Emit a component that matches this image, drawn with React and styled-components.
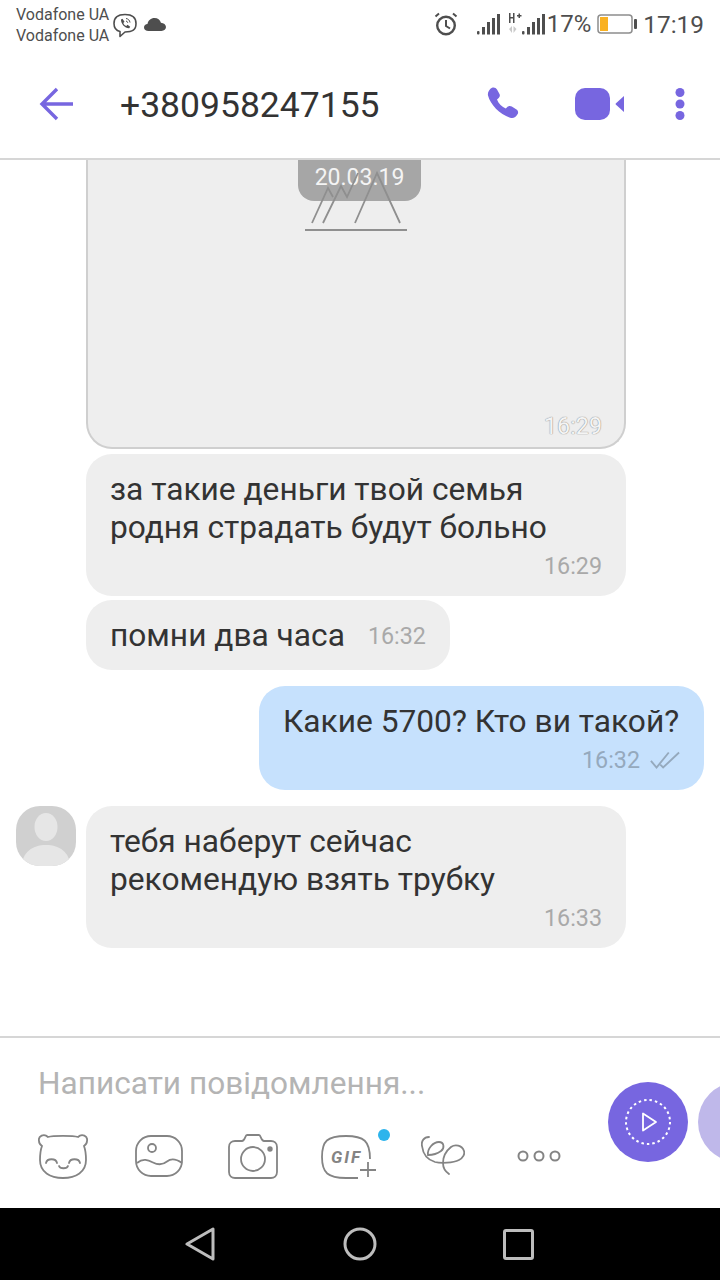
import React from "react";
import styled, { createGlobalStyle } from "styled-components";

const Global = createGlobalStyle`
  html, body { margin: 0; padding: 0; background: #fff; }
  * { box-sizing: border-box; }
`;
const Page = styled.div`
  width: 720px; height: 1280px; overflow: hidden; display: flex; flex-direction: column;
  font-family: Roboto, "Noto Sans", sans-serif; color: #333; background: #fff;
`;
const StatusBar = styled.div`
  height: 50px; display: flex; align-items: flex-start; padding: 3px 16px 0 16px; color: #4e4e4e;
`;
const Carriers = styled.div`
  font-size: 16px; line-height: 21px; width: 96px; white-space: nowrap; padding-top: 1px;
`;
const StatusLeftIcons = styled.div`
  display: flex; align-items: center; gap: 6px; height: 42px;
`;
const StatusRight = styled.div`
  margin-left: auto; display: flex; align-items: center; height: 42px; font-size: 24px; color: #4e4e4e;
`;
const Pct = styled.span`margin: 0 6px 0 1px; font-size: 24px;`;
const Clock = styled.span`margin-left: 5px; font-size: 24.4px;`;
const Header = styled.div`
  height: 110px; border-bottom: 2px solid #d6d6d6; display: flex; align-items: center;
  padding: 0 35px 0 39px; flex: none;
`;
const Title = styled.div`
  font-size: 35.5px; margin-left: 47px; color: #333; flex: 1; padding-top: 2px;
`;
const HeaderIcon = styled.svg`display: block; flex: none; margin-left: ${p => p.$ml || 0}px;`;
const Chat = styled.div`
  height: 876px; flex: none; overflow: hidden; padding: 0 16px; display: flex; flex-direction: column; position: relative;
`;
const ImageBubble = styled.div`
  position: relative; margin-left: 70px; width: 540px; height: 289px; background: #eee; flex: none;
  border: 2px solid #cfcfcf; border-top: none; border-radius: 0 0 26px 26px;
`;
const DateBadge = styled.div`
  position: absolute; top: 0; left: 210px; width: 123px; height: 41px; background: #a6a6a6; color: #f4f4f4;
  border-radius: 0 0 16px 16px; font-size: 23px; display: flex; align-items: center; justify-content: center; padding-bottom: 6px;
`;
const Mountains = styled.svg`position: absolute; left: 217px; top: 0; `;
const ImageTime = styled.span`
  position: absolute; right: 22px; bottom: 7px; font-size: 23.3px; color: #f4f4f4;
  text-shadow: 0 0 1px #8f8f8f, 0 0 1px #8f8f8f;
`;
const Row = styled.div`
  display: flex; align-items: flex-start; justify-content: ${p => p.$out ? "flex-end" : "flex-start"};
  margin-top: ${p => p.$mt}px; flex: none;
`;
const Avatar = styled.div`
  width: 60px; height: 60px; border-radius: 24px; background: #d0d0d0; margin-right: 10px; overflow: hidden; flex: none;
`;
const Bubble = styled.div`
  background: ${p => p.$out ? "#c6e1fd" : "#eee"}; border-radius: 26px;
  width: ${p => p.$w}px; height: ${p => p.$h}px; margin-left: ${p => p.$ml || 0}px;
  padding: 17px 24px 0; position: relative; flex: none;
`;
const MsgText = styled.div`font-size: 31.7px; line-height: 38px; white-space: nowrap; color: #333;`;
const Meta = styled.div`
  display: flex; justify-content: flex-end; align-items: center; gap: 10px; font-size: 23.3px; color: #a9a9a9;
  margin-top: 2px; height: 34px;
`;
const OutMeta = styled(Meta)`color: #95a9bd; margin-top: 2px;`;
const InlineRow = styled.div`display: flex; align-items: center; gap: 23px; height: 38px;`;
const InlineTime = styled.span`font-size: 23.3px; color: #a9a9a9;`;
const Composer = styled.div`
  height: 172px; flex: none; border-top: 2px solid #d6d6d6; display: flex; overflow: hidden;
`;
const ComposerMain = styled.div`
  width: 608px; flex: none; padding: 26px 0 0 38px; display: flex; flex-direction: column;
`;
const Placeholder = styled.div`font-size: 31.6px; line-height: 40px; color: #b4b4b4; white-space: nowrap;`;
const Tools = styled.div`display: flex; align-items: center; margin-top: 29px; height: 46px; position: relative;`;
const Tool = styled.svg`display: block; flex: none; margin-left: ${p => p.$ml || 0}px;`;
const Dot = styled.span`
  position: absolute; left: 340px; top: -4px; width: 12px; height: 12px; border-radius: 50%; background: #2db4ec;
`;
const SendButton = styled.div`
  width: 80px; height: 80px; border-radius: 50%; flex: none; margin-top: 44px; margin-left: ${p => p.$ml || 0}px;
  background: ${p => p.$light ? "#bfb8ea" : "#7766e0"}; display: flex; align-items: center; justify-content: center;
`;
const NavBar = styled.div`
  flex: none; height: 72px; background: #000; display: flex; align-items: center; padding: 0 0 0 185px;
`;
const NavIcon = styled.svg`display: block; flex: none; margin-left: ${p => p.$ml || 0}px;`;

const Signal = ({ w = 24 }) => (
  <svg width={w} height="22" viewBox="0 0 24 22" fill="#4e4e4e">
    <rect x="0" y="18" width="2.5" height="3.5" rx="1" />
    <rect x="5" y="14" width="3" height="7.5" />
    <rect x="10" y="9" width="3" height="12.5" />
    <rect x="15" y="5" width="3" height="16.5" />
    <rect x="20" y="1" width="3" height="20.5" />
  </svg>
);

export default function App() {
  return (
    <Page>
      <Global />
      <StatusBar>
        <Carriers>Vodafone UA<br />Vodafone UA</Carriers>
        <StatusLeftIcons>
          <svg width="26" height="26" viewBox="0 0 26 26" fill="none" stroke="#4e4e4e" strokeWidth="1.6" style={{ marginTop: 1 }}>
            <path d="M8 19.5C3.5 18.5 2 16 2 11.5 2 5 5.5 2.5 13 2.5S24 5 24 11.5 20.5 20 13 20l-5 4.5z" strokeLinejoin="round" />
            <path d="M9 7.5l1.5-.8 2 3-1.2 1.2c.5 1.5 1.500 2.500 3 3l1.200-1.200 2.700 2-1 1.500c-4 .3-8.500-4.500-8.200-8.700z" fill="#4e4e4e" stroke="none" />
            <path d="M14 6.500c2.200.3 3.700 1.800 4 4M14 9c1 .2 1.600.8 1.800 1.800" strokeWidth="1" />
          </svg>
          <svg width="22" height="13" viewBox="0 0 24 14" fill="#4e4e4e" style={{ marginTop: 1 }}>
            <path d="M5 14C2 14 0 12.500 0 10.300 0 8 1.800 6.700 3.800 6.500 4.500 2.800 7.500 0 11.500 0c3.500 0 6 2 7 5 3 .2 5.500 2 5.500 4.800 0 2.500-2 4.200-5 4.200z" />
          </svg>
        </StatusLeftIcons>
        <StatusRight>
          <svg width="24" height="24" viewBox="0 0 24 24" fill="none" stroke="#4e4e4e" strokeWidth="2.4" style={{ marginRight: 19 }}>
            <circle cx="12" cy="13.500" r="8.800" />
            <path d="M12 8v6l4 2.500" strokeWidth="2" />
            <path d="M1.500 4.500L5 1.500M22.500 4.500L19 1.500" strokeWidth="2" />
          </svg>
          <Signal />
          <svg width="14" height="24" viewBox="0 0 14 24" style={{ margin: "0 0 0 7px" }} fill="#4e4e4e">
            <path d="M1 1h1.500v4H5V1h1.500v10H5V6.500H2.500V11H1z" />
            <path d="M9 3h1.500V1.500H12V3h1.500v1.500H12V6h-1.500V4.500H9z" />
            <path d="M1 17l3-3v7zM5.500 14l3 3-3 4z" fill="#c9c9c9" />
          </svg>
          <Signal />
          <Pct>17%</Pct>
          <svg width="41" height="22" viewBox="0 0 41 22" fill="none">
            <rect x="1" y="2" width="34" height="18" rx="3" stroke="#8d8d8d" strokeWidth="1.500" fill="#fff" />
            <rect x="3" y="4" width="8" height="14" fill="#f9b122" />
            <rect x="37" y="6" width="3" height="10" rx="1" fill="#4e4e4e" />
          </svg>
          <Clock>17:19</Clock>
        </StatusRight>
      </StatusBar>
      <Header>
        <HeaderIcon width="34" height="34" viewBox="0 0 34 34" fill="none" stroke="#7766e0" strokeWidth="3.400">
          <path d="M34 17H4M18 2L3 17l15 15" />
        </HeaderIcon>
        <Title>+380958247155</Title>
        <HeaderIcon width="34" height="34" viewBox="0 0 34 34" fill="#7766e0">
          <path d="M5 .8c2-.8 4 0 5 1.700l2.500 4.500c.7 1.500.4 3-.8 4l-1.700 1.400c1.500 4 5 7.500 8.800 9l1.700-1.700c1.300-1 3-1 4.300-.2l4.700 3c1.500 1 2.200 3 1 4.800-1.400 2.500-3.700 4.300-6.500 3.700C13 27.500 3.500 18 1 8.500.3 5.500 2.500 2 5 .8z" />
        </HeaderIcon>
        <HeaderIcon $ml={54} width="50" height="32" viewBox="0 0 50 32" fill="#7766e0">
          <rect x="0" y="0" width="35" height="32" rx="10" />
          <path d="M49 8v16l-8-7.200a1 1 0 010-1.600z" />
        </HeaderIcon>
        <HeaderIcon $ml={50} width="10" height="32" viewBox="0 0 10 32" fill="#7766e0">
          <circle cx="5" cy="4.500" r="4.500" />
          <circle cx="5" cy="16" r="4.500" />
          <circle cx="5" cy="27.500" r="4.500" />
        </HeaderIcon>
      </Header>
      <Chat>
        <ImageBubble>
          <DateBadge>20.03.19</DateBadge>
          <Mountains width="104" height="74" viewBox="0 0 104 74" fill="none" stroke="#8f8f8f" strokeWidth="1.800">
            <path d="M0 70h102" strokeWidth="2.200" />
            <path d="M7 63L23 28l5 9" />
            <path d="M18 63L36 26l6 11 11-24" />
            <path d="M50 63L72 13l23 50" />
          </Mountains>
          <ImageTime>16:29</ImageTime>
        </ImageBubble>
        <Row $mt={5}>
          <Bubble $ml={70} $w={540} $h={142}>
            <MsgText>за такие деньги твой семья<br />родня страдать будут больно</MsgText>
            <Meta>16:29</Meta>
          </Bubble>
        </Row>
        <Row $mt={4}>
          <Bubble $ml={70} $w={364} $h={70}>
            <InlineRow>
              <MsgText>помни два часа</MsgText>
              <InlineTime>16:32</InlineTime>
            </InlineRow>
          </Bubble>
        </Row>
        <Row $mt={16} $out>
          <Bubble $out $w={445} $h={104}>
            <MsgText>Какие 5700? Кто ви такой?</MsgText>
            <OutMeta>
              16:32
              <svg width="30" height="20" viewBox="0 0 32 20" fill="none" stroke="#95a9bd" strokeWidth="2">
                <path d="M1 11l6 7L20 2M11 15l3 3L31 2" />
              </svg>
            </OutMeta>
          </Bubble>
        </Row>
        <Row $mt={16}>
          <Avatar>
            <svg width="60" height="60" viewBox="0 0 60 60" fill="#e6e6e6">
              <ellipse cx="30" cy="21" rx="11.500" ry="14" />
              <path d="M6 60c0-13 10-21 24-21s24 8 24 21z" />
            </svg>
          </Avatar>
          <Bubble $w={540} $h={142}>
            <MsgText>тебя наберут сейчас<br />рекомендую взять трубку</MsgText>
            <Meta>16:33</Meta>
          </Bubble>
        </Row>
      </Chat>
      <Composer>
        <ComposerMain>
          <Placeholder>Написати повідомлення...</Placeholder>
          <Tools>
            <Tool width="50" height="45" viewBox="0 0 50 45" fill="none" stroke="#848484" strokeWidth="1.800" strokeLinecap="round">
              <path d="M10 3C6-1 0 2 1 7c0 2 1.500 4 3 5C2.500 16 2 20 2 26c0 12 10 18 23 18s23-6 23-18c0-6-.5-10-2-14 1.500-1 3-3 3-5 1-5-5-8-9-4-5-1.500-25-1.500-30 0z" />
              <path d="M8 29c1-5 10-5 11 0M31 29c1-5 10-5 11 0M21 32c1 3 8 3 9 0" />
            </Tool>
            <Tool $ml={47} width="48" height="42" viewBox="0 0 48 42" fill="none" stroke="#848484" strokeWidth="1.800">
              <rect x="1" y="1" width="46" height="40" rx="15" />
              <circle cx="17" cy="13" r="4" />
              <path d="M2 28c6-5 11-3 16-.5s9 3 14-1c5-4 10-2 15 1.500" />
            </Tool>
            <Tool $ml={45} width="50" height="45" viewBox="0 0 50 45" fill="none" stroke="#848484" strokeWidth="1.800">
              <path d="M7 7h7c3 0 3-6 5-6h12c2 0 2 6 5 6h7c3 0 6 2 6 6v25c0 4-3 6-6 6H7c-3 0-6-2-6-6V13c0-4 3-6 6-6z" />
              <circle cx="25" cy="25" r="12" />
              <circle cx="42" cy="15" r="1.800" fill="#848484" />
            </Tool>
            <Tool $ml={43} width="56" height="45" viewBox="0 0 56 45" fill="none" stroke="#848484" strokeWidth="1.800">
              <path d="M49 25C49 7 43 2 25 2 6 2 1 7 1 23c0 16 6 21 24 21h12" />
              <path d="M39 36h16M47 28v15" />
              <text x="10" y="29" fill="#848484" stroke="none" fontFamily="Roboto, sans-serif" fontStyle="italic" fontWeight="700" fontSize="17" letterSpacing="2">GIF</text>
            </Tool>
            <Dot />
            <Tool $ml={44} width="44" height="40" viewBox="0 0 44 40" fill="none" stroke="#848484" strokeWidth="1.800" strokeLinecap="round">
              <path d="M8 1C3 1 0 5 1 10c1 8 6 14 13 16 6 1.500 18 1 24-2 4-2 6-6 5-9-2-6-9-7-13-4-5 4-8 10-8 16 0 5 3 9 6 11" />
              <path d="M7 19C6 13 12 6 18 6c5 0 6 6 2 9-4 3-10 4-13 4z" />
            </Tool>
            <Tool $ml={52} width="44" height="12" viewBox="0 0 44 12" fill="none" stroke="#848484" strokeWidth="2">
              <circle cx="6" cy="6" r="4.500" />
              <circle cx="22" cy="6" r="4.500" />
              <circle cx="38" cy="6" r="4.500" />
            </Tool>
          </Tools>
        </ComposerMain>
        <SendButton>
          <svg width="46" height="46" viewBox="0 0 46 46" fill="none" stroke="#fff">
            <circle cx="23" cy="23" r="22" strokeWidth="2" strokeDasharray="2.500 3" />
            <path d="M18 14.500v17L31 23z" strokeWidth="1.800" strokeLinejoin="round" />
          </svg>
        </SendButton>
        <SendButton $light $ml={10} />
      </Composer>
      <NavBar>
        <NavIcon width="30" height="34" viewBox="0 0 30 34" fill="none" stroke="#bdbdbd" strokeWidth="3" strokeLinejoin="round">
          <path d="M28 2v30L2 17z" />
        </NavIcon>
        <NavIcon $ml={128} width="34" height="34" viewBox="0 0 34 34" fill="none" stroke="#bdbdbd" strokeWidth="3">
          <circle cx="17" cy="17" r="15" />
        </NavIcon>
        <NavIcon $ml={126} width="31" height="31" viewBox="0 0 31 31" fill="none" stroke="#bdbdbd" strokeWidth="3">
          <rect x="1.500" y="1.500" width="28" height="28" rx="1.500" />
        </NavIcon>
      </NavBar>
    </Page>
  );
}
